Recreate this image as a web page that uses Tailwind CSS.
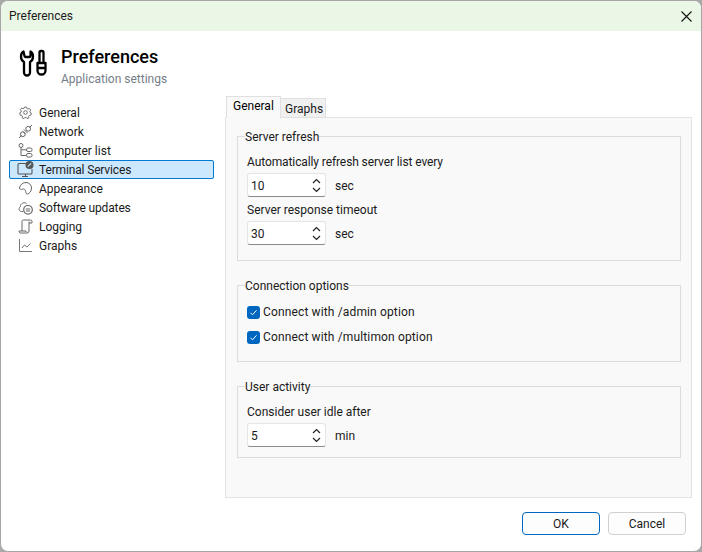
<!doctype html>
<html>

<head>
    <meta charset="UTF-8">
    <script src="https://cdn.jsdelivr.net/npm/@tailwindcss/browser@4"></script>
    <title>Preferences</title>
</head>

<body class="bg-[#a9a9a9]">
    <div class="w-[702px] h-[552px] flex flex-col overflow-hidden bg-white border border-[#a6a6a6] rounded-t-[8px] rounded-b-[8px] font-['Roboto',sans-serif] text-[12px] text-[#1a1a1a]">
        <!-- title bar -->
        <div class="h-[30px] shrink-0 flex items-center justify-between bg-[#ebf7e6] pl-[8px] pr-[9px]">
            <span>Preferences</span>
            <svg class="w-[11px] h-[11px]" viewBox="0 0 11 11" fill="none" stroke="#111" stroke-width="1.1"><path d="M0.5 0.5l10 10M10.5 0.5l-10 10" /></svg>
        </div>

        <!-- header -->
        <div class="h-[61px] shrink-0 flex pl-[18px] pt-[15px]">
            <svg class="w-[28px] h-[28px] mt-[3px]" viewBox="0 0 28 28" fill="none" stroke="#000" stroke-width="2.3" stroke-linejoin="round" stroke-linecap="round">
                <path d="M4.500 2.500C2.500 3.500 2 5.500 2 7.500 2 10 3 12 5 13v10.500a3 3 0 0 0 6 0V13c2-1 3-3 3-5.500 0-2-.5-4-2.500-5V7a1 1 0 0 1-1 1h-4a1 1 0 0 1-1-1z" />
                <path d="M20.500 14V3.500a1.500 1.500 0 0 1 1.500-1.500h1a1.500 1.500 0 0 1 1.500 1.500V14M18.500 14h8v7.500a4 4 0 0 1-8 0zM18.500 19h8" />
            </svg>
            <div class="ml-[14px]">
                <div class="text-[18px] leading-[22px] font-medium text-black">Preferences</div>
                <div class="mt-[3px] text-[12px] leading-[16px] text-[#767e88]">Application settings</div>
            </div>
        </div>

        <!-- body -->
        <div class="flex-1 flex min-h-0">
            <!-- sidebar -->
            <div class="w-[205px] ml-[8px] mt-[11px] shrink-0">
                <div class="h-[19px] flex items-center pl-[9px]">
                    <svg class="w-[15px] h-[15px] mr-[6px]" viewBox="-1.500 -1.500 18 18" fill="none" stroke="#666" stroke-width="1.100"><path d="M6.200 1h2.600l.4 1.800 1.300.6 1.600-.9 1.700 2-1.100 1.500.2 1.400 1.600.8-.5 2.600-1.800.1-.9 1.100.4 1.800-2.400 1-1-1.500H6.800l-1 1.500-2.400-1 .4-1.800-.9-1.100-1.800-.1L.6 7.800l1.600-.8.2-1.400-1.100-1.500 1.700-2 1.600.9 1.300-.6z" /><circle cx="7.500" cy="7.500" r="2.200" /></svg>
                    <span>General</span>
                </div>
                <div class="h-[19px] flex items-center pl-[9px]">
                    <svg class="w-[15px] h-[15px] mr-[6px]" viewBox="0 0 15 15" fill="none" stroke="#666" stroke-width="1"><path d="M1 14l2.500-2.500M14 1l-2.500 2.500M6 5.500l3.500 3.500M5 7.500l2.500 2.500" /><circle cx="4.800" cy="10.200" r="2.400" /><circle cx="10.200" cy="4.800" r="2.400" /></svg>
                    <span>Network</span>
                </div>
                <div class="h-[19px] flex items-center pl-[9px]">
                    <svg class="w-[15px] h-[15px] mr-[6px]" viewBox="0 0 15 15" fill="none" stroke="#666" stroke-width="1"><circle cx="3" cy="2.500" r="2" /><rect x="8.500" y="5" width="5.500" height="3.500" rx="1.500" /><rect x="8.500" y="10.500" width="5.500" height="3.500" rx="1.500" /><path d="M3 4.500v8h5.500M3 6.800h5.500" /></svg>
                    <span>Computer list</span>
                </div>
                <div class="h-[19px] flex items-center pl-[7px] bg-[#cce8ff] border border-[#0078d4] rounded-[2px]">
                    <svg class="w-[17px] h-[17px] mr-[5px]" viewBox="0 0 17 17" fill="none" stroke="#555" stroke-width="1.100"><path d="M9 2.500H2a1 1 0 0 0-1 1v8.500a1 1 0 0 0 1 1h12a1 1 0 0 0 1-1V8M5 15.500h6M8.500 13v2.500" /><circle cx="12.500" cy="4" r="4" fill="#555" stroke="none" /><path d="M10.800 5.700l3.400-3.400" stroke="#cce8ff" /></svg>
                    <span class="tracking-[-0.15px]">Terminal Services</span>
                </div>
                <div class="h-[19px] flex items-center pl-[9px]">
                    <svg class="w-[15px] h-[15px] mr-[6px]" viewBox="0 0 15 15" fill="none" stroke="#666" stroke-width="1"><path d="M1.500 7C2 3.500 5 1.500 8 1.500c3.200 0 5.500 2.500 5.500 5.500s-2 6-4.300 6c-1.300 0-1.200-1.200-1.500-2.500C7.300 8.500 6 7.500 4.500 8.200 3.500 8.700 1.300 8.500 1.500 7z" /></svg>
                    <span>Appearance</span>
                </div>
                <div class="h-[19px] flex items-center pl-[9px]">
                    <svg class="w-[15px] h-[15px] mr-[6px]" viewBox="0 0 15 15" fill="none" stroke="#666" stroke-width="1"><path d="M5 11.500H3.500C1 11.500.3 8 2.300 6.800 2.500 3.500 6 1.500 8.500 3.500" /><circle cx="10" cy="9.800" r="4.300" stroke-width="1.200" /><path d="M7.800 9h4.400M7.800 11h4.400" /></svg>
                    <span class="tracking-[-0.15px]">Software updates</span>
                </div>
                <div class="h-[19px] flex items-center pl-[9px]">
                    <svg class="w-[15px] h-[15px] mr-[6px]" viewBox="0 0 15 15" fill="none" stroke="#666" stroke-width="1"><path d="M4 12V2.500A1.500 1.500 0 0 1 5.500 1h7A1.500 1.500 0 0 1 14 2.500V4h-3M11 2.500V12a2 2 0 0 1-2 2H2.500A1.500 1.500 0 0 1 1 12.500V12h7v1" /></svg>
                    <span>Logging</span>
                </div>
                <div class="h-[19px] flex items-center pl-[9px]">
                    <svg class="w-[15px] h-[15px] mr-[6px]" viewBox="0 0 15 15" fill="none" stroke="#777" stroke-width="1"><path d="M1.500 1v12.500H14M4 10l2.500-3 2.500 2 3.500-3.500" /></svg>
                    <span>Graphs</span>
                </div>
            </div>

            <!-- tabs and panel -->
            <div class="w-[467px] ml-[11px] mt-[4px] flex flex-col">
                <div class="h-[22px] flex items-end pl-[1px] relative z-10">
                    <div class="w-[55px] h-[22px] pl-[6px] bg-[#f9f9f9] border border-b-0 border-[#e0e0e0] text-black">General</div>
                    <div class="w-[45px] h-[20px] pl-[4px] pt-[1px] bg-[#f0f0f0] border border-l-0 border-[#e0e0e0]">Graphs</div>
                </div>
                <div class="h-[381px] -mt-[1px] bg-[#f9f9f9] border border-[#e3e3e3] pl-[11px] pr-[10px] pt-[10px]">
                    <fieldset class="h-[134px] border border-[#dcdcdc] pl-[9px] -mt-[1px]">
                        <legend class="ml-[-2px] pt-[2px] leading-[16px]">Server refresh</legend>
                        <div class="mt-[9px] leading-[16px] tracking-[-0.1px]">Automatically refresh server list every</div>
                        <div class="mt-[3px] flex items-center">
                            <div class="w-[79px] h-[24px] flex items-center justify-between bg-white border border-[#e5e5e5] border-b-[#8a8a8a] rounded-[3px] pl-[3px] pr-[4px]">
                                <span class="mt-[2px]">10</span>
                                <svg class="w-[9px] h-[15px]" viewBox="0 0 9 15" fill="none" stroke="#222" stroke-width="1.200"><path d="M1 5l3.500-3.500L8 5M1 10l3.500 3.500L8 10" /></svg>
                            </div>
                            <span class="ml-[9px] mt-[2px]">sec</span>
                        </div>
                        <div class="mt-[5px] leading-[16px]">Server response timeout</div>
                        <div class="mt-[3px] flex items-center">
                            <div class="w-[79px] h-[24px] flex items-center justify-between bg-white border border-[#e5e5e5] border-b-[#8a8a8a] rounded-[3px] pl-[3px] pr-[4px]">
                                <span class="mt-[2px]">30</span>
                                <svg class="w-[9px] h-[15px]" viewBox="0 0 9 15" fill="none" stroke="#222" stroke-width="1.200"><path d="M1 5l3.500-3.500L8 5M1 10l3.500 3.500L8 10" /></svg>
                            </div>
                            <span class="ml-[9px] mt-[2px]">sec</span>
                        </div>
                    </fieldset>
                    <fieldset class="h-[86px] mt-[15px] border border-[#dcdcdc] pl-[9px]">
                        <legend class="ml-[-2px] pt-[2px] leading-[16px]">Connection options</legend>
                        <div class="mt-[10px] h-[16px] flex items-center">
                            <span class="w-[13px] h-[13px] mr-[3px] flex items-center justify-center bg-[#0067c0] rounded-[3px]"><svg class="w-[9px] h-[9px]" viewBox="0 0 9 9" fill="none" stroke="#fff" stroke-width="1"><path d="M1.500 4.800l2 2 4-4.500" /></svg></span>
                            <span class="tracking-[0.14px]">Connect with /admin option</span>
                        </div>
                        <div class="mt-[9px] h-[16px] flex items-center">
                            <span class="w-[13px] h-[13px] mr-[3px] flex items-center justify-center bg-[#0067c0] rounded-[3px]"><svg class="w-[9px] h-[9px]" viewBox="0 0 9 9" fill="none" stroke="#fff" stroke-width="1"><path d="M1.500 4.800l2 2 4-4.500" /></svg></span>
                            <span class="tracking-[0.14px]">Connect with /multimon option</span>
                        </div>
                    </fieldset>
                    <fieldset class="h-[81px] mt-[15px] border border-[#dcdcdc] pl-[9px]">
                        <legend class="ml-[-2px] pt-[2px] leading-[16px]">User activity</legend>
                        <div class="mt-[9px] leading-[16px]">Consider user idle after</div>
                        <div class="mt-[3px] flex items-center">
                            <div class="w-[79px] h-[24px] flex items-center justify-between bg-white border border-[#e5e5e5] border-b-[#8a8a8a] rounded-[3px] pl-[3px] pr-[4px]">
                                <span class="mt-[2px]">5</span>
                                <svg class="w-[9px] h-[15px]" viewBox="0 0 9 15" fill="none" stroke="#222" stroke-width="1.200"><path d="M1 5l3.500-3.500L8 5M1 10l3.500 3.500L8 10" /></svg>
                            </div>
                            <span class="ml-[9px] mt-[2px]">min</span>
                        </div>
                    </fieldset>
                </div>
            </div>
        </div>

        <!-- buttons -->
        <div class="h-[53px] shrink-0 flex justify-end gap-[8px] pt-[14px] pr-[15px]">
            <button class="w-[78px] h-[23px] bg-[#fdfdfd] border border-[#0067c0] rounded-[4px]">OK</button>
            <button class="w-[78px] h-[23px] bg-[#fdfdfd] border border-[#d0d0d0] rounded-[4px]">Cancel</button>
        </div>
    </div>
</body>

</html>
